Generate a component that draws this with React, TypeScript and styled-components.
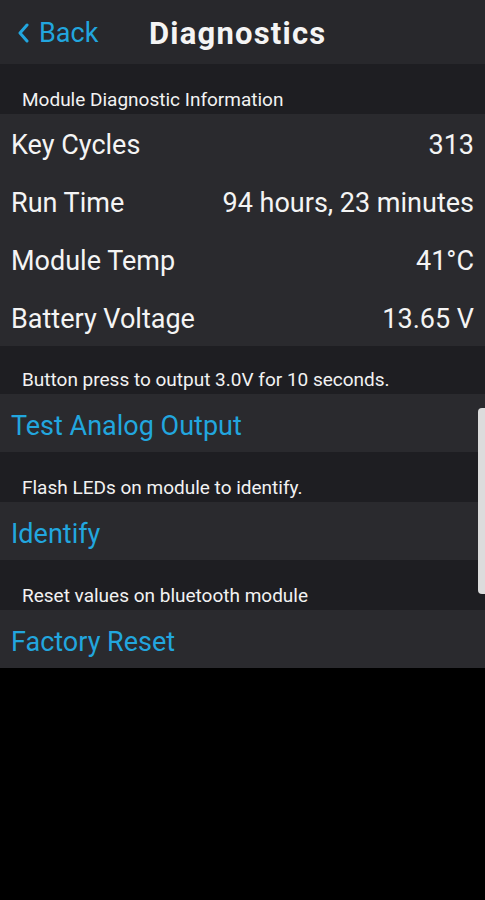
import React from "react";
import styled, { createGlobalStyle } from "styled-components";

const Global = createGlobalStyle`
  html, body { margin: 0; padding: 0; background: #000; }
  body { font-family: Roboto, "Noto Sans", Arial, sans-serif; }
  * { box-sizing: border-box; }
`;

const Screen = styled.div`
  position: relative;
  width: 485px;
  height: 900px;
  background: #000;
  overflow: hidden;
`;

const Header = styled.header`
  height: 64px;
  background: #28282c;
  display: flex;
  align-items: center;
  padding: 2px 0 0 17px;
`;

const BackButton = styled.div`
  display: flex;
  align-items: center;
  gap: 10px;
  color: #22a6de;
  font-size: 27px;
  width: 132px;
`;

const Title = styled.h1`
  margin: 0;
  color: #f4f4f4;
  font-size: 31px;
  font-weight: 700;
  letter-spacing: 1.2px;
`;

const SectionHeader = styled.div<{ $h: number }>`
  height: ${(p) => p.$h}px;
  background: #1e1e22;
  color: #f2f2f2;
  font-size: 19px;
  line-height: 22px;
  padding: ${(p) => p.$h - 25}px 0 0 22px;
`;

const Group = styled.div`
  background: #2a2a2e;
`;

const InfoRow = styled.div`
  height: 58px;
  display: flex;
  align-items: center;
  justify-content: space-between;
  padding: 4px 11px 0 11px;
  color: #f4f4f4;
  font-size: 27px;
`;

const ActionRow = styled.div`
  height: 58px;
  display: flex;
  align-items: center;
  padding: 5px 11px 0;
  color: #22a6de;
  font-size: 27px;
  background: #2a2a2e;
`;

const Scrollbar = styled.div`
  position: absolute;
  right: 0;
  top: 408px;
  width: 7px;
  height: 186px;
  background: #dcdcdc;
  border-radius: 4px 0 0 4px;
`;

const Chevron = () => (
  <svg width="12" height="20" viewBox="0 0 12 20">
    <path d="M10 2 L3 10 L10 18" fill="none" stroke="#22a6de" strokeWidth="3" strokeLinecap="round" strokeLinejoin="round" />
  </svg>
);

const info = [
  ["Key Cycles", "313"],
  ["Run Time", "94 hours, 23 minutes"],
  ["Module Temp", "41°C"],
  ["Battery Voltage", "13.65 V"],
];

const actions: [string, string, number][] = [
  ["Button press to output 3.0V for 10 seconds.", "Test Analog Output", 48],
  ["Flash LEDs on module to identify.", "Identify", 50],
  ["Reset values on bluetooth module", "Factory Reset", 50],
];

export default function App() {
  return (
    <Screen>
      <Global />
      <Header>
        <BackButton>
          <Chevron />
          <span>Back</span>
        </BackButton>
        <Title>Diagnostics</Title>
      </Header>
      <SectionHeader $h={50}>Module Diagnostic Information</SectionHeader>
      <Group>
        {info.map(([k, v]) => (
          <InfoRow key={k}>
            <span>{k}</span>
            <span>{v}</span>
          </InfoRow>
        ))}
      </Group>
      {actions.map(([desc, label, h]) => (
        <React.Fragment key={label}>
          <SectionHeader $h={h}>{desc}</SectionHeader>
          <ActionRow>{label}</ActionRow>
        </React.Fragment>
      ))}
      <Scrollbar />
    </Screen>
  );
}
